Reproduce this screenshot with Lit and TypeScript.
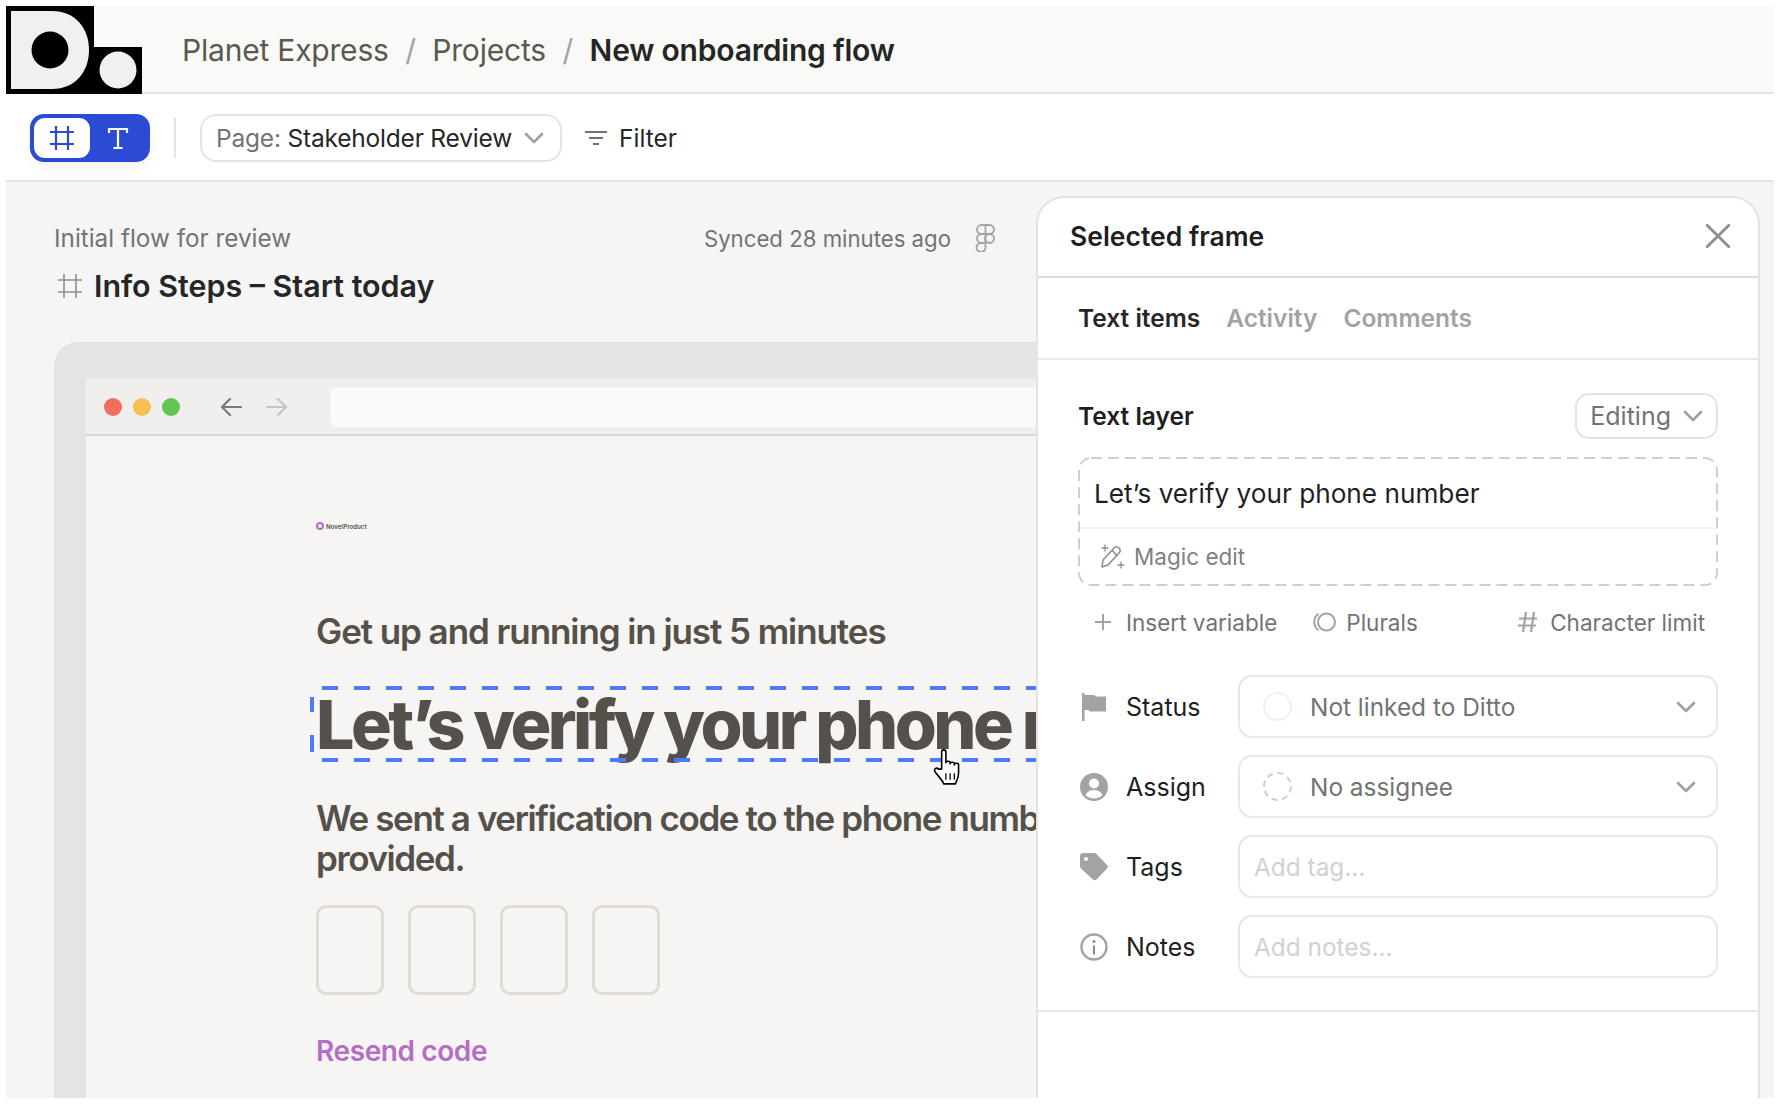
import { LitElement, html, css, svg } from 'lit';
import { customElement } from 'lit/decorators.js';

const chevron = html`<svg class="chev" viewBox="0 0 20 12" width="20" height="12" fill="none" stroke="#a0a0a0" stroke-width="2.600" stroke-linecap="round" stroke-linejoin="round"><path d="M2 2l8 8 8-8" /></svg>`;

const hash = (size: number, color: string, w = 2) => html`<svg viewBox="0 0 24 24" width=${size} height=${size} fill="none" stroke=${color} stroke-width=${w}><path d="M6 0v24M18 0v24M0 6h24M0 18h24" /></svg>`;

const flag = svg`<path d="M2 0h2.600v2H14l2 1.500H26v15H10l-2-1.500H4.600V28H2z" fill="#a3a3a3" />`;
const person = svg`<circle cx="14" cy="14" r="14" fill="#a3a3a3" /><circle cx="14" cy="10.500" r="5" fill="#fff" /><path d="M5.500 22c1.500-3.500 4.500-5 8.500-5s7 1.500 8.500 5c-2 2.300-5 3.500-8.500 3.500s-6.500-1.200-8.500-3.500z" fill="#fff" />`;
const tag = svg`<path d="M3 0h11c1 0 1.700.3 2.400 1l10.600 11c1 1 1 2.500 0 3.500L16.500 26.500c-1 1-2.500 1-3.500 0L1 15.500C.3 14.800 0 14 0 13V3c0-1.700 1.300-3 3-3z" fill="#a3a3a3" /><circle cx="6" cy="6" r="2" fill="#fff" />`;
const info = svg`<circle cx="14" cy="14" r="12.500" fill="none" stroke="#a3a3a3" stroke-width="2.400" /><circle cx="14" cy="8.500" r="1.500" fill="#8a8a8a" /><path d="M14 12.500v9" stroke="#8a8a8a" stroke-width="2" />`;

const rows = [
  { icon: flag, label: 'Status', value: 'Not linked to Ditto', kind: 'solid' },
  { icon: person, label: 'Assign', value: 'No assignee', kind: 'dashed' },
  { icon: tag, label: 'Tags', value: 'Add tag...', kind: 'input' },
  { icon: info, label: 'Notes', value: 'Add notes...', kind: 'input' },
];

@customElement('side-panel')
export class SidePanel extends LitElement {
  protected render() {
    return html`
      <div class="head">
        <span>Selected frame</span>
        <svg viewBox="0 0 24 24" width="26" height="26" fill="none" stroke="#8f8f8f" stroke-width="2.600" stroke-linecap="round"><path d="M2 2l20 20M22 2L2 22" /></svg>
      </div>
      <div class="tabs">
        <span class="on">Text items</span><span>Activity</span><span>Comments</span>
      </div>
      <div class="body">
        <div class="layer-head">
          <span>Text layer</span>
          <div class="editing">Editing ${chevron}</div>
        </div>
        <div class="text-box">
          <svg class="dash"><rect x="1" y="1" rx="12" /></svg>
          <div class="text-value">Let’s verify your phone number</div>
          <div class="magic">
            <svg viewBox="0 0 26 26" width="26" height="26" fill="none" stroke="#8f8f8f" stroke-width="1.600" stroke-linejoin="round" stroke-linecap="round">
              <path d="M3 23l1-7L15 4c1.500-1.500 3.500-1.500 5 0s1.500 3.500 0 5L9 21zM13 6l5 6" />
              <path d="M6 1v6M3 4h6M22 18v6M19 21h6" stroke-width="1.300" />
            </svg>
            Magic edit
          </div>
        </div>
        <div class="actions">
          <span class="act first"><svg viewBox="0 0 18 18" width="18" height="18" stroke="#a3a3a3" stroke-width="2"><path d="M9 1v16M1 9h16" /></svg>Insert variable</span>
          <span class="act plurals"><svg viewBox="0 0 26 20" width="26" height="20" fill="none" stroke="#a3a3a3" stroke-width="2"><circle cx="15.500" cy="10" r="8.500" /><path d="M7.500 1.800A10 10 0 0 0 7.500 18.200" /></svg>Plurals</span>
          <span class="act limit"><svg viewBox="0 0 20 22" width="20" height="22" fill="none" stroke="#a3a3a3" stroke-width="2.200"><path d="M8 1L5 21M16 1l-3 20M1 7.500h18M0 14.500h18" /></svg>Character limit</span>
        </div>
        <div class="fields">
          ${rows.map(
            (r) => html`
              <div class="row">
                <svg class="row-icon" viewBox="0 0 28 28" width="28" height="28">${r.icon}</svg>
                <span class="row-label">${r.label}</span>
                <div class="field ${r.kind}">
                  ${r.kind === 'input' ? '' : html`<span class="ring"></span>`}
                  <span class="val">${r.value}</span>
                  ${r.kind === 'input' ? '' : chevron}
                </div>
              </div>
            `
          )}
        </div>
      </div>
    `;
  }

  static styles = css`
    :host {
      display: block;
      width: 724px;
      flex: none;
      box-sizing: border-box;
      margin: 14px 14px 0 0;
      background: #fff;
      border: 2px solid #e4e4e4;
      border-bottom: 0;
      border-radius: 28px 28px 0 0;
      color: #1f1f1f;
      overflow: hidden;
    }
    .head {
      height: 80px;
      box-sizing: border-box;
      display: flex;
      align-items: center;
      justify-content: space-between;
      padding: 0 27px 2px 32px;
      border-bottom: 2px solid #dcdcdc;
      font-size: 26.500px;
      font-weight: 600;
    }
    .tabs {
      height: 82px;
      box-sizing: border-box;
      display: flex;
      align-items: center;
      gap: 26px;
      padding: 0 40px;
      border-bottom: 2px solid #e8e8e8;
      font-size: 24.500px;
      font-weight: 600;
      color: #a3a3a3;
    }
    .tabs .on {
      color: #262626;
    }
    .body {
      padding: 33px 40px 32px;
      border-bottom: 2px solid #e8e8e8;
    }
    .layer-head {
      display: flex;
      align-items: center;
      justify-content: space-between;
      height: 46px;
      font-size: 24.500px;
      font-weight: 600;
    }
    .editing {
      height: 46px;
      box-sizing: border-box;
      display: flex;
      align-items: center;
      gap: 12px;
      padding: 0 13px;
      border: 2px solid #e4e4e4;
      border-radius: 14px;
      font-size: 25px;
      font-weight: 400;
      color: #737373;
    }
    .text-box {
      position: relative;
      margin-top: 18px;
      height: 129px;
      box-sizing: border-box;
      padding: 2px;
    }
    .dash {
      position: absolute;
      inset: 0;
      width: 100%;
      height: 100%;
    }
    .dash rect {
      width: calc(100% - 2px);
      height: calc(100% - 2px);
      fill: none;
      stroke: #cfcfcf;
      stroke-width: 2;
      stroke-dasharray: 11 6;
    }
    .text-value {
      height: 70px;
      box-sizing: border-box;
      padding: 0 14px;
      display: flex;
      align-items: center;
      border-bottom: 2px solid #f3f3f3;
      font-size: 26.200px;
    }
    .magic {
      display: flex;
      align-items: center;
      gap: 9px;
      height: 55px;
      padding: 0 19px;
      font-size: 22.500px;
      color: #808080;
    }
    .actions {
      display: flex;
      align-items: center;
      height: 36px;
      margin-top: 18px;
      font-size: 22.500px;
      color: #737373;
    }
    .act {
      display: flex;
      align-items: center;
    }
    .first {
      padding-left: 16px;
      gap: 14px;
    }
    .plurals {
      margin-left: 34px;
      gap: 9px;
    }
    .limit {
      margin-left: auto;
      margin-right: 13px;
      gap: 12px;
    }
    .fields {
      display: flex;
      flex-direction: column;
      gap: 17px;
      margin-top: 35px;
    }
    .row {
      display: flex;
      align-items: center;
      height: 63px;
    }
    .row-icon {
      margin-right: 18px;
      margin-left: 2px;
      flex: none;
    }
    .row-label {
      width: 112px;
      font-size: 25px;
    }
    .field {
      flex: 1;
      height: 63px;
      box-sizing: border-box;
      display: flex;
      align-items: center;
      padding: 0 20px 0 23px;
      border: 2px solid #e8e8e8;
      border-radius: 14px;
      font-size: 24.400px;
      color: #737373;
    }
    .field.input {
      padding-left: 14px;
      color: #d1d1d1;
    }
    .ring {
      width: 29px;
      height: 29px;
      box-sizing: border-box;
      border-radius: 50%;
      margin-right: 18px;
      border: 2px solid #f0f0f0;
    }
    .dashed .ring {
      border: 2px dashed #cfcfcf;
    }
    .val {
      flex: 1;
    }
    .chev {
      flex: none;
    }
  `;
}

@customElement('app-root')
export class AppRoot extends LitElement {
  protected render() {
    return html`
      <div class="page">
        <header class="crumbs">
          <svg class="logo" viewBox="0 0 136 88" width="136" height="88">
            <path d="M0 0h88v41h48v47H0z" fill="#000" />
            <path d="M5 5h41c23 0 37 17 37 39s-14 39-37 39H5z" fill="#f0f0f0" />
            <circle cx="44" cy="44" r="18.500" fill="#000" />
            <circle cx="112" cy="64" r="18.500" fill="#f0f0f0" />
          </svg>
          <span>Planet Express</span><i>/</i><span>Projects</span><i>/</i><b>New onboarding flow</b>
        </header>

        <div class="toolbar">
          <div class="toggle">
            <span class="tg on">${hash(24, '#2b4bd4', 2.2)}</span>
            <span class="tg">
              <svg viewBox="0 0 22 22" width="22" height="22" fill="none" stroke="#fff" stroke-width="2.200"><path d="M2 6V2h18v4M11 2v19M6.500 21h9" /></svg>
            </span>
          </div>
          <div class="sep"></div>
          <div class="select"><span class="muted">Page:</span>&nbsp;Stakeholder Review ${chevron}</div>
          <div class="filter">
            <svg viewBox="0 0 22 16" width="22" height="16" stroke="#737373" stroke-width="2"><path d="M0 2h22M4 8h14M8 14h6" /></svg>
            Filter
          </div>
        </div>

        <div class="main">
          <section class="left">
            <div class="meta">
              <span>Initial flow for review</span>
              <span class="sync">
                Synced 28 minutes ago
                <svg viewBox="0 0 20 28" width="21" height="28" fill="none" stroke="#a3a3a3" stroke-width="1.800">
                  <path d="M10 1H6a4.500 4.500 0 0 0 0 9h4zM10 1h4a4.500 4.500 0 0 1 0 9h-4zM10 10H6a4.500 4.500 0 0 0 0 9h4zM10 19H6a4.500 4.500 0 1 0 4 4.500z" />
                  <circle cx="14" cy="14.500" r="4.500" />
                </svg>
              </span>
            </div>
            <div class="frame-title">${hash(24, '#8f8f8f', 1.6)}<span>Info Steps – Start today</span></div>

            <div class="frame">
              <div class="window">
                <div class="chrome">
                  <span class="dot" style="background:#f16d60"></span>
                  <span class="dot" style="background:#f6bf4f"></span>
                  <span class="dot" style="background:#61c554"></span>
                  <svg class="back" viewBox="0 0 22 20" width="22" height="20" fill="none" stroke="#7a7a7a" stroke-width="2.200" stroke-linecap="round" stroke-linejoin="round"><path d="M21 10H2M10 2l-8 8 8 8" /></svg>
                  <svg class="fwd" viewBox="0 0 22 20" width="22" height="20" fill="none" stroke="#c4c4c4" stroke-width="2.200" stroke-linecap="round" stroke-linejoin="round"><path d="M1 10h19M12 2l8 8-8 8" /></svg>
                  <div class="url"></div>
                </div>
                <div class="content">
                  <div class="brand"><span class="brand-ring"></span>NovelProduct</div>
                  <h2>Get up and running in just 5 minutes</h2>
                  <div class="selected">
                    <h1>Let’s verify your phone number</h1>
                    <span class="sel-top"></span><span class="sel-bottom"></span><span class="sel-left"></span>
                    <svg class="hand" viewBox="0 0 30 36" width="32" height="38" fill="#fff" stroke="#000" stroke-width="1.500" stroke-linejoin="round">
                      <path d="M9 20V4c0-3 4-3 4 0v10c0-2 4-2 4 0v1c0-2 4-2 4 0v1c0-2 4-2 4 0v8c0 5-2 7-3 10H11c-1-3-4-6-8-11-2-3 1-5 3-3z" />
                      <path d="M13 24v6M17 24v6M21 24v6" fill="none" stroke-width="1.200" />
                    </svg>
                  </div>
                  <p>We sent a verification code to the phone number you provided.</p>
                  <div class="code">
                    ${[0, 1, 2, 3].map(() => html`<span></span>`)}
                  </div>
                  <div class="resend">Resend code</div>
                </div>
              </div>
            </div>
          </section>
          <side-panel></side-panel>
        </div>
      </div>
    `;
  }

  static styles = css`
    :host {
      display: block;
      font-family: Inter, 'Noto Sans', sans-serif;
      background: #fff;
    }
    .page {
      box-sizing: border-box;
      height: 1105px;
      padding: 6px 6px 7px 6px;
      display: flex;
      flex-direction: column;
    }
    .crumbs {
      height: 88px;
      flex: none;
      box-sizing: border-box;
      display: flex;
      align-items: center;
      padding-top: 2px;
      background: #f9f9f7;
      border-bottom: 2px solid #e6e6e6;
      font-size: 30px;
      letter-spacing: -0.2px;
      color: #5c5850;
    }
    .logo {
      flex: none;
      align-self: flex-start;
      margin: -2px 40px 0 0;
    }
    .crumbs i {
      font-style: normal;
      color: #a3a3a3;
      margin: 0 16.500px;
    }
    .crumbs b {
      font-weight: 600;
      color: #262626;
    }
    .toolbar {
      height: 88px;
      flex: none;
      box-sizing: border-box;
      display: flex;
      align-items: center;
      padding: 2px 24px 0;
      border-bottom: 2px solid #e6e6e6;
      font-size: 24.500px;
      color: #262626;
    }
    .toggle {
      width: 120px;
      height: 48px;
      box-sizing: border-box;
      display: flex;
      align-items: center;
      padding: 4px;
      background: #2b4bd4;
      border-radius: 14px;
      box-shadow: 0 6px 12px rgba(0, 0, 0, 0.05);
    }
    .tg {
      flex: 1;
      height: 40px;
      display: flex;
      align-items: center;
      justify-content: center;
      border-radius: 11px;
    }
    .tg.on {
      flex: none;
      width: 56px;
      background: #fff;
    }
    .sep {
      width: 2px;
      height: 40px;
      background: #e4e4e4;
      margin: 0 24px;
    }
    .select {
      width: 362px;
      height: 48px;
      box-sizing: border-box;
      display: flex;
      align-items: center;
      padding: 0 14px;
      border: 2px solid #e4e4e4;
      border-radius: 16px;
      white-space: nowrap;
      letter-spacing: -0.2px;
    }
    .select .chev {
      flex: none;
      margin-left: 12px;
    }
    .muted {
      color: #737373;
    }
    .filter {
      display: flex;
      align-items: center;
      gap: 12px;
      margin-left: 23px;
    }
    .main {
      flex: 1;
      min-height: 0;
      display: flex;
      background: #f5f5f5;
    }
    .left {
      flex: 1;
      min-width: 0;
      overflow: hidden;
      display: flex;
      flex-direction: column;
    }
    .meta {
      display: flex;
      justify-content: space-between;
      align-items: center;
      height: 32px;
      margin-top: 40px;
      padding: 0 40px 0 48px;
      font-size: 24.300px;
      color: #737373;
    }
    .sync {
      display: flex;
      align-items: center;
      gap: 24px;
      font-size: 22.200px;
    }
    .frame-title {
      display: flex;
      align-items: center;
      gap: 12px;
      height: 40px;
      margin: 12px 0 0 52px;
      font-size: 30.400px;
      font-weight: 600;
      color: #262626;
    }
    .frame {
      flex: 1;
      margin: 36px 0 0 48px;
      padding: 36px 0 0 32px;
      width: 1400px;
      box-sizing: border-box;
      background: #e4e4e4;
      border-radius: 24px 0 0 0;
    }
    .window {
      height: 100%;
      background: #f6f5f3;
    }
    .chrome {
      height: 58px;
      box-sizing: border-box;
      display: flex;
      align-items: center;
      padding: 2px 0 0 18px;
      background: #f0efed;
      border-bottom: 2px solid #d9d8d5;
    }
    .dot {
      width: 18px;
      height: 18px;
      border-radius: 50%;
      margin-right: 11px;
    }
    .back {
      margin-left: 29px;
    }
    .fwd {
      margin-left: 24px;
    }
    .url {
      flex: 1;
      height: 40px;
      margin-left: 42px;
      background: #fbfaf8;
      border-radius: 8px;
    }
    .content {
      padding: 85px 0 0 230px;
      color: #55514a;
    }
    .brand {
      display: flex;
      align-items: center;
      gap: 2px;
      height: 10px;
      font-size: 6.200px;
      font-weight: 600;
    }
    .brand-ring {
      width: 8px;
      height: 8px;
      box-sizing: border-box;
      border: 2px solid #b56dc6;
      border-radius: 50%;
    }
    h2 {
      margin: 78px 0 0;
      height: 44px;
      line-height: 44px;
      font-size: 35px;
      font-weight: 600;
      letter-spacing: -1.080px;
    }
    .selected {
      position: relative;
      margin-top: 33px;
      height: 76px;
    }
    h1 {
      margin: 0;
      line-height: 76px;
      white-space: nowrap;
      font-size: 68px;
      font-weight: 800;
      letter-spacing: -3.500px;
    }
    .sel-top,
    .sel-bottom {
      position: absolute;
      left: 6px;
      width: 730px;
      height: 4px;
      background: repeating-linear-gradient(90deg, #4a7df5 0 16px, transparent 16px 32px);
    }
    .sel-top {
      top: 0;
    }
    .sel-bottom {
      bottom: 0;
    }
    .sel-left {
      position: absolute;
      left: -6px;
      top: 11px;
      width: 4px;
      height: 55px;
      background: linear-gradient(180deg, #4a7df5 0 15px, transparent 15px 38px, #4a7df5 38px);
    }
    .hand {
      position: absolute;
      left: 616px;
      top: 62px;
    }
    p {
      margin: 36px 0 0;
      width: 930px;
      font-size: 35px;
      line-height: 40px;
      font-weight: 600;
      letter-spacing: -1.400px;
    }
    .code {
      display: flex;
      gap: 24px;
      margin-top: 27px;
    }
    .code span {
      width: 68px;
      height: 90px;
      box-sizing: border-box;
      border: 3px solid #e0dcd3;
      border-radius: 10px;
    }
    .resend {
      margin-top: 39px;
      font-size: 28px;
      font-weight: 600;
      letter-spacing: -0.4px;
      color: #b56dc6;
    }
  `;
}
